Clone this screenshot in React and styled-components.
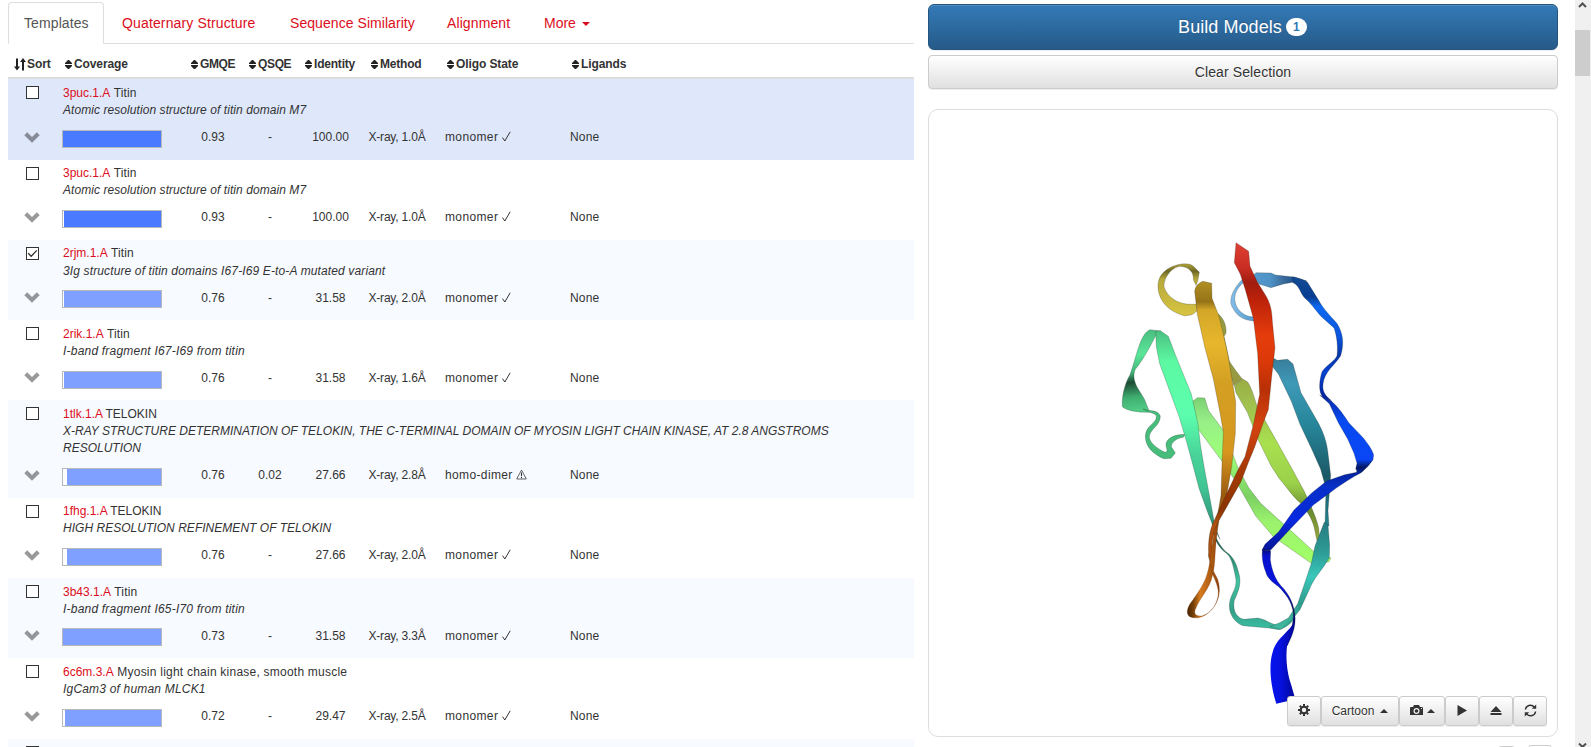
import React from 'react';
import styled, { createGlobalStyle, css } from 'styled-components';

const Global = createGlobalStyle`
  * { box-sizing: border-box; }
  html, body { margin: 0; height: 747px; overflow: hidden; }
  body {
    background: #fff;
    color: #333;
    font-family: "Liberation Sans", Arial, sans-serif;
    font-size: 12px;
    line-height: 17.14px;
  }
`;

const Page = styled.div`
  display: flex;
  width: 1591px;
  height: 747px;
  overflow: hidden;
`;
const Results = styled.main`
  width: 906px;
  margin-left: 8px;
  flex: none;
`;
const Side = styled.aside`
  width: 630px;
  margin-left: 14px;
  padding-top: 4px;
  flex: none;
`;

/* Tabs */
const Tabs = styled.nav`
  display: flex;
  height: 44px;
  padding-top: 2px;
  border-bottom: 1px solid #ddd;
`;
const Tab = styled.a`
  width: ${(p) => p.$w}px;
  height: 42px;
  margin-right: 2px;
  padding: 10px 0 0 15px;
  flex: none;
  font-size: 14px;
  line-height: 20px;
  letter-spacing: ${(p) => p.$ls || 0}px;
  white-space: nowrap;
  color: #dc0d20;
  border: 1px solid transparent;
  ${(p) => p.$active && css`
    color: #555;
    background: #fff;
    border-color: #ddd #ddd #fff;
    border-radius: 4px 4px 0 0;
  `}
`;
const Caret = styled.span`
  display: inline-block;
  margin-left: ${(p) => (p.$up ? 2 : 6)}px;
  vertical-align: ${(p) => (p.$up ? 0 : 2)}px;
  border: 4px solid transparent;
  border-${(p) => (p.$up ? 'top' : 'bottom')}-width: 0;
  border-${(p) => (p.$up ? 'bottom' : 'top')}-color: currentColor;
`;

/* Table */
const columns = '49px 128px 56px 58px 63px 78px 125px 1fr';
const HeadRow = styled.div`
  display: grid;
  grid-template-columns: ${columns};
  height: 35.35px;
  padding-top: 12px;
  border-bottom: 2px solid #ddd;
  font-weight: bold;
`;
const HeadCell = styled.div`
  display: flex;
  align-items: center;
  height: 17px;
  padding-left: ${(p) => p.$pad}px;
  gap: ${(p) => p.$gap || 2}px;
  letter-spacing: ${(p) => p.$ls || 0}px;
  white-space: nowrap;
`;
const backgrounds = { selected: '#dfe8fb', odd: '#f7faff', even: '#fff' };
const Row = styled.section`
  height: ${(p) => (p.$tall ? 97.42 : 80.28)}px;
  padding-top: 5.5px;
  background: ${(p) => backgrounds[p.$tone]};
`;
const Summary = styled.div`
  display: grid;
  grid-template-columns: 49px 1fr;
`;
const Box = styled.span`
  display: block;
  width: 13px;
  height: 13px;
  margin: 1.55px 0 0 18px;
  border: 1px solid #333;
  background: #fff;
  svg { display: block; }
`;
const Titles = styled.div`
  padding: 0 60px 0 6px;
`;
const Line = styled.div`
  white-space: nowrap;
  letter-spacing: ${(p) => p.$ls || 0}px;
`;
const Link = styled.a`
  color: #dc0d20;
  letter-spacing: 0;
`;
const Description = styled.em`
  display: block;
  white-space: pre-line;
  letter-spacing: ${(p) => p.$ls || 0}px;
`;
const Values = styled.div`
  display: grid;
  grid-template-columns: ${columns};
  margin-top: 9.9px;
`;
const Cell = styled.div`
  text-align: ${(p) => (p.$center ? 'center' : 'left')};
  padding-left: ${(p) => p.$pad || 0}px;
  letter-spacing: ${(p) => p.$ls || 0}px;
  white-space: nowrap;
  svg { vertical-align: -1px; }
`;
const Chevron = styled.svg`
  display: block;
  width: 16px;
  height: 11px;
  margin: 2.6px 0 0 16px;
  fill: rgba(0, 0, 0, 0.4);
`;
const Bar = styled.div`
  width: 100px;
  height: 18px;
  margin: 0.7px 0 0 5px;
  padding-left: ${(p) => p.$gap}px;
  background: #fff;
  border: 1px solid #b5b8bd;
`;
const Fill = styled.div`
  height: 100%;
  background: ${(p) => (p.$strong ? '#4a7aff' : '#80a0ff')};
`;

/* Right column */
const Button = styled.button`
  display: flex;
  align-items: center;
  justify-content: center;
  width: 100%;
  padding: 0;
  font-family: inherit;
  color: #333;
  text-shadow: 0 1px 0 #fff;
  border: 1px solid #ccc;
  border-radius: 4px;
  background: linear-gradient(#fff, #e0e0e0);
  box-shadow: inset 0 1px 0 rgba(255,255,255,.15), 0 1px 1px rgba(0,0,0,.075);
`;
const BuildButton = styled(Button)`
  height: 46px;
  font-size: 18px;
  letter-spacing: 0.06px;
  color: #fff;
  text-shadow: 0 -1px 0 rgba(0,0,0,.2);
  border-color: #245580;
  border-radius: 6px;
  background: linear-gradient(#337ab7, #265a88);
`;
const Badge = styled.span`
  width: 21px;
  height: 18px;
  margin: 0 1px 0 4px;
  border-radius: 10px;
  background: #fff;
  color: #337ab7;
  font-size: 12px;
  font-weight: bold;
  line-height: 18px;
  text-align: center;
  text-shadow: none;
`;
const ClearButton = styled(Button)`
  height: 34px;
  margin-top: 5px;
  font-size: 14px;
  letter-spacing: 0.1px;
`;
const Viewer = styled.div`
  position: relative;
  height: 628px;
  margin-top: 20px;
  border: 1px solid #ddd;
  border-radius: 10px;
`;
const Molecule = styled.svg`
  display: block;
  width: 290px;
  height: 480px;
  margin: 120px 0 0 181px;
`;
const Toolbar = styled.div`
  position: absolute;
  right: 10px;
  bottom: 10px;
  display: flex;
`;
const Tool = styled(Button)`
  width: ${(p) => p.$w}px;
  height: 30px;
  font-size: 12px;
  border-radius: 3px;
  gap: ${(p) => (p.$tight ? 2 : 4)}px;
  svg { fill: #333; flex: none; margin-bottom: 2px; }
`;
const Below = styled.div`
  display: flex;
  justify-content: flex-end;
  gap: 13px;
  padding: 8px 6px 0 0;
`;
const Stub = styled.span`
  width: ${(p) => p.$w}px;
  height: 24px;
  margin-top: ${(p) => p.$top || 0}px;
  border: 1px solid #ccc;
  border-radius: 3px;
`;

/* Scroll bar */
const Scrollbar = styled.div`
  display: flex;
  flex-direction: column;
  width: 16px;
  margin-left: 17px;
  height: 747px;
  background: #f0f0f0;
  flex: none;
  svg { display: block; margin-left: 3px; fill: none; stroke: #505050; stroke-width: 2; }
`;
const Thumb = styled.div`
  width: 15px;
  height: 46px;
  margin: 20px 0 667px;
  background: #cdcdcd;
`;

const SortIcon = () => (
  <svg width="7" height="9" viewBox="0 0 7 9"><path d="M3 0h1l3 3v1H0V3zM0 5h7v1L4 9H3L0 6z" fill="#222" /></svg>
);
const SortAllIcon = () => (
  <svg width="12" height="13" viewBox="0 0 12 13">
    <path d="M2 .5h2v8h2L3 12.5 0 8.5h2zM9 0l3 4h-2v8.5H8V4H6z" fill="#222" />
  </svg>
);
const Tick = () => (
  <svg width="9" height="11" viewBox="0 0 9 11"><path d="M.5 6.6 2.8 10 8.2.8" fill="none" stroke="#333" strokeWidth="1" /></svg>
);
const Warning = () => (
  <svg width="11" height="11" viewBox="0 0 11 11">
    <path d="M5.5 1 10.3 10H.7z" fill="none" stroke="#555" strokeWidth=".9" />
    <path d="M5.5 3.5v3.7M5.5 8v1.2" stroke="#333" strokeWidth="1.1" />
  </svg>
);

const heads = [
  ['Coverage', 8, -0.1], ['GMQE', 6, -0.4], ['QSQE', 8, -0.35], ['Identity', 6, -0.2],
  ['Method', 9, -0.2], ['Oligo State', 7, -0.1], ['Ligands', 7, -0.1],
];

const A = 'Atomic resolution structure of titin domain M7';
const rows = [
  { tone: 'selected', id: '3puc.1.A', name: 'Titin', text: A, ls: 0.066, gap: 0, strong: true, v: ['0.93', '-', '100.00', 'X-ray, 1.0Å', 'monomer'] },
  { tone: 'even', id: '3puc.1.A', name: 'Titin', text: A, ls: 0.066, gap: 1, strong: true, v: ['0.93', '-', '100.00', 'X-ray, 1.0Å', 'monomer'] },
  { tone: 'odd', checked: true, id: '2rjm.1.A', name: 'Titin', text: '3Ig structure of titin domains I67-I69 E-to-A mutated variant', ls: 0.13, gap: 1, v: ['0.76', '-', '31.58', 'X-ray, 2.0Å', 'monomer'] },
  { tone: 'even', id: '2rik.1.A', name: 'Titin', text: 'I-band fragment I67-I69 from titin', ls: 0.21, gap: 1, v: ['0.76', '-', '31.58', 'X-ray, 1.6Å', 'monomer'] },
  { tone: 'odd', tall: true, id: '1tlk.1.A', name: 'TELOKIN', text: 'X-RAY STRUCTURE DETERMINATION OF TELOKIN, THE C-TERMINAL DOMAIN OF MYOSIN LIGHT CHAIN KINASE, AT 2.8 ANGSTROMS\nRESOLUTION', gap: 4, v: ['0.76', '0.02', '27.66', 'X-ray, 2.8Å', 'homo-dimer'] },
  { tone: 'even', id: '1fhg.1.A', name: 'TELOKIN', text: 'HIGH RESOLUTION REFINEMENT OF TELOKIN', ls: 0.03, gap: 4, v: ['0.76', '-', '27.66', 'X-ray, 2.0Å', 'monomer'] },
  { tone: 'odd', id: '3b43.1.A', name: 'Titin', text: 'I-band fragment I65-I70 from titin', ls: 0.21, gap: 0, v: ['0.73', '-', '31.58', 'X-ray, 3.3Å', 'monomer'] },
  { tone: 'even', id: '6c6m.3.A', name: 'Myosin light chain kinase, smooth muscle', nls: 0.23, text: 'IgCam3 of human MLCK1', ls: 0.19, gap: 2, v: ['0.72', '-', '29.47', 'X-ray, 2.5Å', 'monomer'] },
];

function TemplateRow({ r }) {
  const [gmqe, qsqe, identity, method, state] = r.v;
  return (
    <Row $tone={r.tone} $tall={r.tall}>
      <Summary>
        <Box>
          {r.checked && (
            <svg width="11" height="11" viewBox="0 0 11 11"><path d="M1.2 5.3 4.2 8.3 9.8 2.4" fill="none" stroke="#333" strokeWidth="1.3" /></svg>
          )}
        </Box>
        <Titles>
          <Line $ls={r.nls || (r.name === 'Titin' ? 0.15 : 0)}><Link>{r.id}</Link> {r.name}</Line>
          <Description $ls={r.ls}>{r.text}</Description>
        </Titles>
      </Summary>
      <Values>
        <Cell><Chevron viewBox="0 0 16 11"><path d="M3.2.3 8 5 12.8.3 15.7 3.2 8 10.8.3 3.2z" /></Chevron></Cell>
        <Cell><Bar $gap={r.gap}><Fill $strong={r.strong} /></Bar></Cell>
        <Cell $center>{gmqe}</Cell>
        <Cell $center>{qsqe}</Cell>
        <Cell $center>{identity}</Cell>
        <Cell $pad={6.5} $ls={-0.2}>{method}</Cell>
        <Cell $pad={5} $ls={0.37}>{state} {state === 'monomer' ? <Tick /> : <Warning />}</Cell>
        <Cell $pad={5} $ls={0.2}>None</Cell>
      </Values>
    </Row>
  );
}

const Grad = ({ id, stops, x1 = 0, y1 = 0, x2 = 0, y2 = 1440 }) => (
  <linearGradient id={id} gradientUnits="userSpaceOnUse" x1={x1} y1={y1} x2={x2} y2={y2}>
    {stops.map(([o, c], i) => <stop key={i} offset={o} stopColor={c} />)}
  </linearGradient>
);

const Protein = () => (
  <Molecule viewBox="0 0 870 1440">
    <defs>
      <Grad id="loop" y1={100} y2={258} stops={[[0, '#b8aa3d'], [0.15, '#6e6724'], [0.3, '#b7a93c'], [1, '#d8c440']]} />
      <Grad id="lime" y1={450} y2={930} stops={[[0, '#9aad44'], [0.12, '#9fbd4e'], [0.4, '#a8e04f'], [0.65, '#9bd04a'], [0.82, '#6a8a30'], [1, '#9aa83c']]} />
      <Grad id="mint" y1={500} y2={1000} stops={[[0, '#79cf70'], [0.15, '#98ef88'], [0.35, '#9dff78'], [0.6, '#7cd063'], [0.75, '#9bf26d'], [1, '#a2ff68']]} />
      <Grad id="spring" y1={300} y2={930} stops={[[0, '#4abf80'], [0.15, '#5cf8a2'], [0.4, '#5cffae'], [0.6, '#48d298'], [0.75, '#41c496'], [0.9, '#319a7c'], [1, '#1f5c4c']]} />
      <Grad id="hook" x1={60} x2={90} y1={300} y2={550} stops={[[0, '#48b97b'], [0.3, '#5ae69a'], [0.5, '#44b77a'], [0.62, '#1d4c35'], [0.8, '#3fae70'], [1, '#55d38b']]} />
      <Grad id="aqua" y1={910} y2={1200} stops={[[0, '#1a4c40'], [0.25, '#2d8a74'], [0.5, '#42c3a3'], [0.8, '#349f88'], [1, '#3cc0a4']]} />
      <Grad id="teal" y1={880} y2={1200} stops={[[0, '#267d84'], [0.25, '#2d9892'], [0.5, '#38c8bb'], [0.75, '#2e9c8d'], [1, '#42bda2']]} />
      <Grad id="cyan" y1={385} y2={890} stops={[[0, '#397d9c'], [0.15, '#3e99b7'], [0.4, '#268599'], [0.7, '#1c5967'], [1, '#238390']]} />
      <Grad id="sky" x1={365} x2={560} y2={0} stops={[[0, '#82bce7'], [0.35, '#549bd0'], [0.6, '#4e91c5'], [0.8, '#3b6b9a'], [1, '#164c91']]} />
      <Grad id="azure" y1={140} y2={500} stops={[[0, '#144b94'], [0.17, '#073d91'], [0.25, '#0d68f1'], [0.5, '#0b54db'], [0.65, '#0637a8'], [0.8, '#0642d0'], [1, '#0423a2']]} />
      <Grad id="blue" y1={500} y2={735} stops={[[0, '#0728aa'], [0.3, '#074af0'], [0.8, '#0b46f6'], [0.9, '#031762'], [1, '#0626b2']]} />
      <Grad id="royal" y1={700} y2={980} stops={[[0, '#061a83'], [0.25, '#0731c8'], [0.6, '#0828df'], [0.9, '#0618a0'], [1, '#020b50']]} />
      <Grad id="navy" y1={940} y2={1200} stops={[[0, '#000530'], [0.15, '#0712d0'], [0.5, '#0714da'], [0.8, '#020760'], [1, '#020ca0']]} />
      <Grad id="tail" x1={480} x2={550} y2={0} stops={[[0, '#0612ef'], [0.45, '#0712df'], [1, '#0207a0']]} />
      <Grad id="gold" y1={155} y2={1010} stops={[[0, '#b18f22'], [0.07, '#967318'], [0.1, '#d3a728'], [0.22, '#e8b62b'], [0.35, '#d3a023'], [0.6, '#d7961e'], [0.75, '#9a5a0f'], [1, '#c06f1b']]} />
      <Grad id="red" y1={40} y2={880} stops={[[0, '#df4034'], [0.09, '#c82c20'], [0.14, '#a01d10'], [0.2, '#bc2109'], [0.33, '#e53d0c'], [0.42, '#dc3908'], [0.52, '#b93006'], [0.65, '#d44310'], [0.8, '#a83a06'], [0.95, '#8a3302'], [1, '#ae5110']]} />
      <Grad id="rust" x1={230} x2={330} y2={0} stops={[[0, '#432000'], [0.2, '#754009'], [0.4, '#d77b1e'], [0.75, '#ac5912'], [1, '#8e3d0a']]} />
    </defs>
    <g strokeLinejoin="round" stroke="#182018" strokeOpacity=".45" strokeWidth="1.5">
      <path fill="url(#sky)" d="M398 147C365 180 353 215 370 237C382 258 400 271 432 273L430 261C402 260 382 240 377 222C368 194 383 172 405 153Z" />
      <path fill="url(#sky)" d="M428 137L438 128L483 129L496 135L551 141L590 153L570 169L548 157L520 162L483 173L447 162Z" />
      <path fill="url(#azure)" d="M548 140C566 144 580 148 592 156L626 211C640 238 661 258 680 279C700 309 703 342 692 377C676 405 643 423 639 463C636 489 650 499 664 512L642 504C622 489 629 447 636 425C648 406 676 392 681 377C684 352 681 319 672 294L635 261C614 238 600 216 584 204C569 188 570 168 548 157Z" />
      <path fill="#989a41" d="M322 250C338 260 351 286 348 310L342 319L358 393C366 407 384 431 397 447L371 466L358 420Z" />
      <path fill="url(#lime)" d="M373 466L398 447L413 456C424 470 435 510 442 530L548 720L584 786C602 827 619 862 626 894L628 918L621 932L612 890C604 863 592 845 571 819C545 797 530 770 508 746L483 707L444 628L412 547L378 488Z" />
      <path fill="url(#mint)" d="M248 514L262 503L284 504L296 542L342 604L384 713L416 773L452 820L535 895L612 965L663 984L656 996L604 1000L490 920L437 858L383 763L340 699L262 594Z" />
      <path fill="url(#hook)" d="M120 299L151 303L137 317C124 345 93 399 76 418C69 435 71 450 81 471L103 507L119 547C84 547 52 543 37 530C35 500 43 464 60 434C80 379 90 311 120 299Z" />
      <path fill="#47bd7c" d="M99 537C127 545 143 539 151 558C151 587 124 594 118 617C116 637 140 654 165 667C180 664 164 655 169 637C178 619 199 614 225 613L220 622C199 624 184 638 184 650L196 669L183 685L161 686C130 672 107 652 106 620C108 582 141 582 139 557C131 547 112 548 99 537Z" />
      <path fill="url(#spring)" d="M137 304L151 302L175 319L196 374L244 492L264 582L272 650L284 720L303 822L315 890L330 928L310 890L294 850L267 775L250 710L231 640L208 562L182 491L149 401L139 351Z" />
      <path fill="url(#aqua)" d="M307 880C313 921 326 942 346 964C366 977 378 995 385 1025C397 1059 385 1084 373 1111C367 1142 380 1163 402 1168L443 1164C466 1167 478 1181 500 1185C516 1186 535 1169 551 1154L555 1165C540 1184 525 1194 507 1199L475 1194L399 1187C371 1177 357 1149 358 1125C360 1090 383 1078 377 1044C368 997 363 982 349 970C328 954 318 936 310 912Z" />
      <path fill="url(#cyan)" d="M489 384L502 391L533 388L549 402L573 488L617 565C643 609 651 639 655 678L662 736L654 842L657 888L645 886L648 775L632 718L606 659L570 583L544 514L505 432L486 408Z" />
      <path fill="url(#teal)" d="M643 876L654 886L659 945L658 983L641 1010C621 1036 607 1055 597 1081L570 1139L542 1174L513 1198L480 1190L509 1178L535 1164L563 1121L584 1060L604 1000L615 948Z" />
      <path fill="url(#royal)" d="M740 709L786 693L774 709L752 729C703 754 653 793 610 825L540 898L479 963L456 960L465 943L506 905L552 840L606 788L650 753L704 734L740 727Z" />
      <path fill="url(#blue)" d="M629 495L664 513C686 532 702 557 717 579L760 624C776 645 784 655 791 674L789 690L755 727L737 718L741 700L732 670L713 627L685 578L658 521Z" />
      <path fill="url(#navy)" d="M457 959L482 963L481 989C485 1020 496 1048 513 1067C540 1095 553 1125 555 1160C558 1193 544 1222 532 1247L520 1230C544 1207 551 1179 550 1147C544 1111 525 1090 506 1070C488 1057 471 1044 467 1025C460 1006 455 990 457 959Z" />
      <path fill="url(#tail)" stroke="none" d="M547 1186C552 1210 535 1226 531 1249C526 1290 533 1333 543 1363L556 1408L499 1421C480 1361 477 1304 487 1270C495 1231 527 1213 547 1186Z" />
      <path fill="url(#loop)" fillRule="evenodd" d="M268 126L263 154L258 166L250 149C252 127 237 111 211 109C185 111 162 142 162 170C171 201 205 225 249 223L262 222L260 244L246 254L224 258C195 249 174 237 159 216C138 185 140 148 158 130C174 111 212 96 239 103C251 106 256 116 268 126Z" />
      <path fill="url(#gold)" d="M254 184C257 168 264 160 279 154L305 160L306 205L326 256L338 304L354 376L377 515L376 610L365 710L350 796L330 850L318 930L308 1005L299 1028L306 960L318 881L333 796L336 700L340 607L330 548L310 447L285 354L262 253Z" />
      <path fill="url(#red)" d="M378 38L416 64L420 109L442 156L468 198C481 219 486 243 487 274L495 353L485 440L475 539C454 589 441 639 418 690L393 755L335 858C308 898 306 935 306 968L304 1005L296 980C294 937 297 903 312 873L337 818L384 719L405 680L430 584L449 493L443 371L430 265L406 179L391 133L373 98Z" />
      <path fill="url(#rust)" stroke="#67330d" d="M296 970C297 1007 312 1023 323 1048C333 1078 329 1110 308 1136C289 1158 265 1170 239 1160C225 1150 233 1128 249 1109C267 1084 285 1057 292 1030C300 1002 306 958 313 901L324 875C313 954 318 1003 307 1038C300 1076 270 1101 255 1141C252 1155 261 1160 278 1157C305 1148 322 1121 325 1091C325 1061 307 1039 301 1011Z" />
    </g>
  </Molecule>
);

const GearIcon = () => (
  <svg width="12" height="12" viewBox="0 0 12 12">
    <circle cx="6" cy="6" r="3.3" fill="none" stroke="#333" strokeWidth="2.1" />
    <path d="M6 0v2M6 10v2M0 6h2M10 6h2M1.8 1.8l1.4 1.4M8.8 8.8l1.4 1.4M1.8 10.2l1.4-1.4M8.8 3.2l1.4-1.4" stroke="#333" strokeWidth="2" />
  </svg>
);
const CameraIcon = () => (
  <svg width="13" height="11" viewBox="0 0 13 11">
    <path fillRule="evenodd" d="M0 2.5 1 2h2l1-2h5l1 2h2l1 .8V10H0zM6.5 3a3 3 0 1 0 0 6 3 3 0 0 0 0-6m0 1.2a1.8 1.8 0 1 1 0 3.6 1.8 1.8 0 0 1 0-3.6M11 3h1v1h-1z" />
  </svg>
);
const PlayIcon = () => <svg width="10" height="11" viewBox="0 0 10 11"><path d="M.5 0 10 5.5.5 11z" /></svg>;
const EjectIcon = () => <svg width="12" height="9" viewBox="0 0 12 9"><path d="M6 0 11.5 6H.5zM.5 7h11v2H.5z" /></svg>;
const RefreshIcon = () => (
  <svg width="13" height="13" viewBox="0 0 13 13">
    <path d="M1.4 5.5C2 1.2 7.2-.3 10.4 3.1M11.6 7.5C11 11.8 5.8 13.3 2.6 9.9" fill="none" stroke="#333" strokeWidth="1.5" />
    <path d="M12.2.5v4.2H7.8zM.8 12.5V8.3h4.4z" />
  </svg>
);

export default function App() {
  return (
    <>
      <Global />
      <Page>
        <Results>
          <Tabs>
            <Tab $active $w={96} $ls={0.1}>Templates</Tab>
            <Tab $w={166} $ls={0.14}>Quaternary Structure</Tab>
            <Tab $w={155} $ls={0.06}>Sequence Similarity</Tab>
            <Tab $w={95} $ls={0.1}>Alignment</Tab>
            <Tab $w={80}>More<Caret /></Tab>
          </Tabs>
          <HeadRow>
            <HeadCell $pad={6} $gap={1} $ls={-0.1}><SortAllIcon />Sort</HeadCell>
            {heads.map(([label, pad, ls]) => (
              <HeadCell key={label} $pad={pad} $ls={ls}><SortIcon />{label}</HeadCell>
            ))}
          </HeadRow>
          {rows.map((r, i) => <TemplateRow key={i} r={r} />)}
          <Row $tone="odd"><Summary><Box /></Summary></Row>
        </Results>
        <Side>
          <BuildButton>Build Models<Badge>1</Badge></BuildButton>
          <ClearButton>Clear Selection</ClearButton>
          <Viewer>
            <Protein />
            <Toolbar>
              <Tool $w={34}><GearIcon /></Tool>
              <Tool $w={78}>Cartoon <Caret $up /></Tool>
              <Tool $w={46} $tight><CameraIcon /><Caret $up /></Tool>
              <Tool $w={34}><PlayIcon /></Tool>
              <Tool $w={34}><EjectIcon /></Tool>
              <Tool $w={34}><RefreshIcon /></Tool>
            </Toolbar>
          </Viewer>
          <Below><Stub $w={17} $top={1} /><Stub $w={24} /></Below>
        </Side>
        <Scrollbar>
          <svg width="9" height="10" viewBox="0 0 9 10"><path d="M1 7 4.5 3.5 8 7" /></svg>
          <Thumb />
          <svg width="9" height="4" viewBox="0 0 9 4"><path d="M1 .5 4.5 4 8 .5" /></svg>
        </Scrollbar>
      </Page>
    </>
  );
}
